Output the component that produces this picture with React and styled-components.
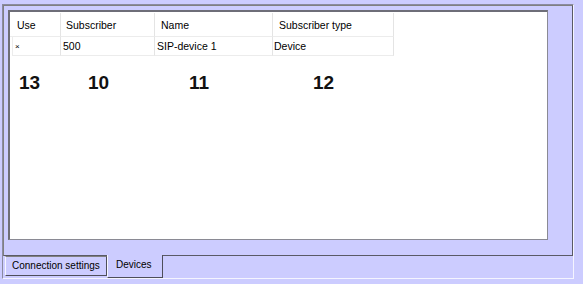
import styled, { createGlobalStyle } from "styled-components";

const GlobalStyle = createGlobalStyle`
  html, body {
    margin: 0;
    padding: 0;
    background: #ccccff;
  }
  body {
    font-family: "Liberation Sans", Arial, sans-serif;
    color: #000;
  }
`;

const Screen = styled.div`
  width: 583px;
  height: 284px;
  background: #ccccff;
  padding: 4px 0 0 2px;
  box-sizing: border-box;
`;

const Frame = styled.div`
  width: 572px;
  height: 275px;
  box-sizing: border-box;
  border-top: 1px solid #8a8aa0;
  border-left: 1px solid #8a8aa0;
  border-right: 1px solid #f4f4ff;
  border-bottom: 1px solid #f4f4ff;
  display: flex;
  flex-direction: column;
`;

const Panel = styled.div`
  width: 570px;
  height: 252px;
  box-sizing: border-box;
  border-top: 1px solid #808080;
  border-left: 1px solid #808080;
  border-right: 1px solid #5a5a66;
  border-bottom: 1px solid #5a5a66;
  padding: 4px 24px 15px 4px;
`;

const ListBox = styled.div`
  height: 100%;
  box-sizing: border-box;
  background: #ffffff;
  border-top: 2px solid #6e6e78;
  border-left: 2px solid #6e6e78;
  border-right: 1px solid #8a8a94;
  border-bottom: 1px solid #8a8a94;
  padding-top: 1px;
`;

const Grid = styled.div`
  display: grid;
  grid-template-columns: 51px 94px 118px 121px;
  font-size: 10.5px;
`;

const HeadCell = styled.div`
  height: 24px;
  box-sizing: border-box;
  display: flex;
  align-items: center;
  padding-left: ${(p) => p.$pad || 6}px;
  border-right: 1px solid #e4e4e4;
  border-bottom: 1px solid #ececec;
`;

const Cell = styled.div`
  height: 19px;
  box-sizing: border-box;
  display: flex;
  align-items: center;
  padding-left: ${(p) => p.$pad || 2}px;
  margin-left: ${(p) => p.$indent || 0}px;
  border-right: 1px solid #e4e4e4;
  border-bottom: 1px solid #ececec;
  border-left: ${(p) => (p.$indent ? "1px solid #ececec" : "none")};
  font-size: ${(p) => p.$small || 10.5}px;
`;

const Marks = styled.div`
  display: flex;
  padding-left: 9px;
  margin-top: 16px;
`;

const Mark = styled.div`
  width: ${(p) => p.$w || 40}px;
  font-size: 19px;
  font-weight: bold;
  color: #111;
`;

const TabStrip = styled.div`
  display: flex;
  align-items: flex-start;
  padding-left: 2px;
  font-size: 10px;
`;

const Tab = styled.div`
  box-sizing: border-box;
  width: ${(p) => p.$w}px;
  height: ${(p) => (p.$active ? 23 : 20)}px;
  margin-top: ${(p) => (p.$active ? -1 : 0)}px;
  padding: ${(p) => (p.$active ? "4px 0 0 8px" : "3px 0 0 6px")};
  background: #ccccff;
  border-left: 1px solid #f6f6ff;
  border-right: 1px solid #4e4e5a;
  border-bottom: 1px solid #4e4e5a;
  border-top: ${(p) => (p.$active ? "none" : "1px solid #808080")};
  white-space: nowrap;
`;

const columns = [
  { head: "Use", value: "×", headPad: 7, small: 8, indent: 2 },
  { head: "Subscriber", value: "500", headPad: 5 },
  { head: "Name", value: "SIP-device 1", headPad: 6 },
  { head: "Subscriber type", value: "Device", headPad: 6, pad: 1 },
];

const marks = [
  { n: "13", w: 69 },
  { n: "10", w: 101 },
  { n: "11", w: 124 },
  { n: "12", w: 40 },
];

export default function App() {
  return (
    <Screen>
      <GlobalStyle />
      <Frame>
        <Panel>
          <ListBox>
            <Grid>
              {columns.map((c) => (
                <HeadCell key={c.head} $pad={c.headPad}>
                  {c.head}
                </HeadCell>
              ))}
              {columns.map((c) => (
                <Cell
                  key={c.head + "-v"}
                  $pad={c.pad}
                  $small={c.small}
                  $indent={c.indent}
                >
                  {c.value}
                </Cell>
              ))}
            </Grid>
            <Marks>
              {marks.map((m) => (
                <Mark key={m.n} $w={m.w}>
                  {m.n}
                </Mark>
              ))}
            </Marks>
          </ListBox>
        </Panel>
        <TabStrip>
          <Tab $w={102}>Connection settings</Tab>
          <Tab $active $w={56}>Devices</Tab>
        </TabStrip>
      </Frame>
    </Screen>
  );
}
